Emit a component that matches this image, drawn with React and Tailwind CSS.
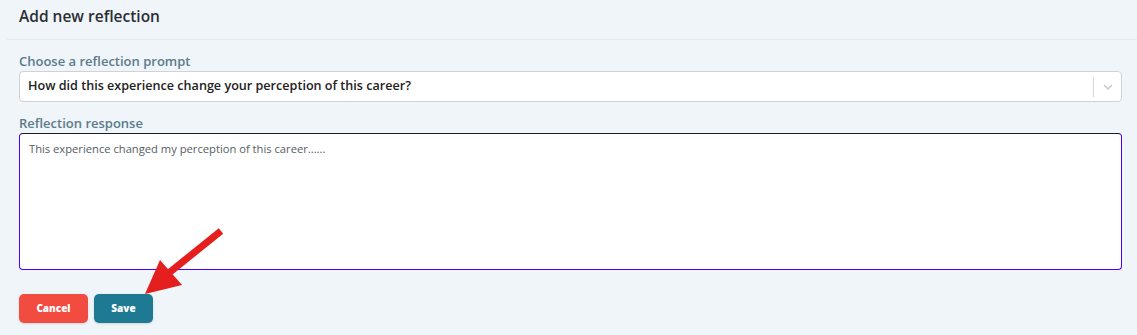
import React, { useState } from 'react';

const font = { fontFamily: '"Open Sans", "Liberation Sans", sans-serif' };

const prompts = [
  'How did this experience change your perception of this career?',
  'What did you learn about yourself?',
  'What skills did you use or develop?',
];

const App = () => {
  const [prompt, setPrompt] = useState(prompts[0]);
  const [text, setText] = useState('This experience changed my perception of this career......');

  return (
    <div className="relative w-[1137px] h-[335px] bg-[#f0f5fa] overflow-hidden" style={font}>
      <div className="pl-[19px] pt-[6px] h-[39px]">
        <h2 className="text-[15.5px] font-semibold text-[#2b2f33] leading-[21px]">Add new reflection</h2>
      </div>
      <div className="ml-[7px] border-t border-[#e3e8ec]" />

      <div className="px-[19px] pr-[15px] pt-[12px]">
        <label className="block text-[13px] font-semibold text-[#5b7b8b] leading-[18px]">Choose a reflection prompt</label>
        <div className="mt-[1px] flex items-center h-[31px] bg-white border border-[#cfd3d6] rounded-[4px]">
          <select
            value={prompt}
            onChange={e => setPrompt(e.target.value)}
            className="flex-1 appearance-none bg-transparent outline-none pl-[8px] text-[12.6px] font-semibold text-[#222]"
          >
            {prompts.map(p => <option key={p} value={p}>{p}</option>)}
          </select>
          <div className="w-px h-[20px] bg-[#d4d4d4]" />
          <div className="w-[27px] flex justify-center">
            <svg width="10" height="6" viewBox="0 0 10 6" fill="none">
              <path d="M1 1l4 4 4-4" stroke="#c6c6c6" strokeWidth="1.4" />
            </svg>
          </div>
        </div>

        <label className="block mt-[12px] text-[13px] font-semibold text-[#5b7b8b] leading-[18px]">Reflection response</label>
        <textarea
          value={text}
          onChange={e => setText(e.target.value)}
          className="mt-[1px] block w-full h-[137px] resize-none bg-white rounded-[4px] border-[1.5px] border-[#4a00ff] border-t-[#1c1c28] outline-none px-[9px] py-[7px] text-[11.2px] text-[#555d66]"
        />

        <div className="flex gap-[6px] mt-[24px]">
          <button className="w-[69px] h-[29px] rounded-[5px] bg-[#f24b3f] text-white text-[10px] font-extrabold shadow-sm">Cancel</button>
          <button className="w-[59px] h-[29px] rounded-[5px] bg-[#1e7a93] text-white text-[10px] font-extrabold shadow-sm">Save</button>
        </div>
      </div>

      <svg className="absolute left-0 top-0 pointer-events-none" width="1137" height="335">
        <line x1="221" y1="231" x2="170" y2="272" stroke="#e51e1e" strokeWidth="7" />
        <polygon points="145,294 160,260 182,285" fill="#e51e1e" />
      </svg>
    </div>
  );
};

export default App;
